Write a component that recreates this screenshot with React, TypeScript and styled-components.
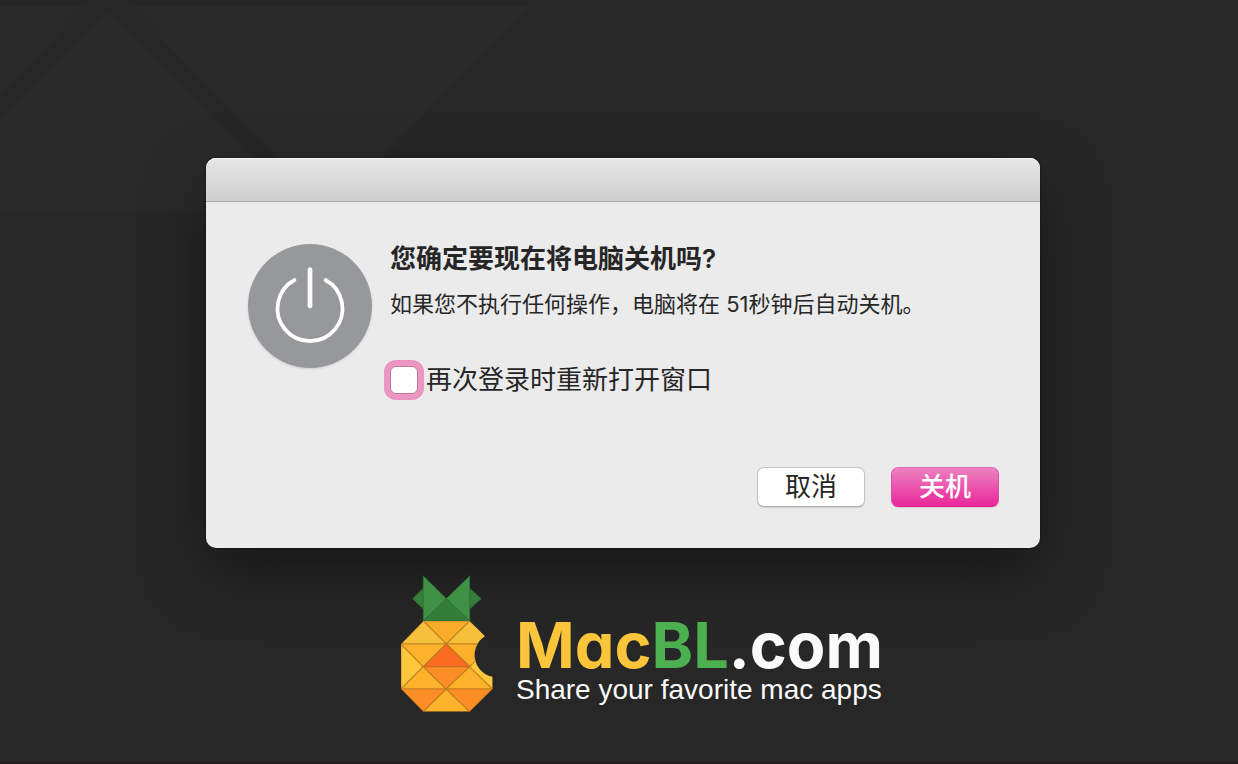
import React from "react";
import styled, { createGlobalStyle } from "styled-components";

const GlobalStyle = createGlobalStyle`
  *, *::before, *::after { box-sizing: border-box; }
  body {
    margin: 0;
    background: #272727;
    color: #262626;
    font-family: Inter, "Noto Sans CJK SC", sans-serif;
  }
`;

const Desktop = styled.main`
  position: relative;
  display: flex;
  flex-direction: column;
  align-items: center;
  gap: 28px;
  min-height: 100vh;
  padding: 158px 16px 48px 24px;
  overflow: hidden;
  border-bottom: 2px solid #221e20;
`;

const Wallpaper = styled.svg`
  position: absolute;
  top: 0;
  left: 0;
  fill: #2a2a2a;
`;

const Dialog = styled.section`
  position: relative;
  width: 100%;
  max-width: 834px;
  border-radius: 10px;
  background: #ebebeb;
  box-shadow: 0 0 2px rgba(0, 0, 0, 0.6), 0 24px 64px rgba(0, 0, 0, 0.42);
`;

const TitleBar = styled.header`
  height: 44px;
  border-bottom: 1px solid #aaa8aa;
  border-radius: 10px 10px 0 0;
  background: linear-gradient(#e6e6e6, #cfcfcf);
  box-shadow: inset 0 1px 0 #f6f6f6;
`;

const DialogBody = styled.form`
  display: flex;
  flex-direction: column;
  gap: 72px;
  padding: 42px 41px 41px 42px;
`;

const Message = styled.div`
  display: flex;
  align-items: flex-start;
  gap: 18px;
`;

const PowerIcon = styled.svg`
  flex: none;
  width: 124px;
  height: 124px;
  overflow: visible;
  filter: drop-shadow(0 1px 1px rgba(0, 0, 0, 0.12));
`;

const MessageText = styled.div`
  display: flex;
  flex-direction: column;
`;

const Title = styled.h1`
  margin: 0;
  font-size: 26px;
  font-weight: 600;
  line-height: 30px;
`;

const Detail = styled.p`
  margin: 15px 0 0;
  font-size: 22px;
  line-height: 30px;
`;

const CheckRow = styled.label`
  display: flex;
  align-items: center;
  gap: 8px;
  margin-top: 46px;
  font-size: 26px;
  line-height: 30px;
`;

const Checkbox = styled.input`
  flex: none;
  appearance: none;
  width: 28px;
  height: 28px;
  margin: 0;
  border: 1px solid #c7799f;
  border-radius: 6px;
  background: #fff;
  box-shadow: 0 0 0 6px #eb96c0;
  outline: none;

  &:checked {
    background: #e82f9a;
  }
`;

const Actions = styled.div`
  display: flex;
  justify-content: flex-end;
  gap: 26px;
`;

const Button = styled.button`
  width: 108px;
  height: 40px;
  padding: 0;
  border: 1px solid #c4c4c4;
  border-bottom-color: #adadad;
  border-radius: 7px;
  background: #fff;
  box-shadow: 0 1px 1px rgba(0, 0, 0, 0.12);
  color: #262626;
  font: inherit;
  font-size: 26px;
  line-height: 36px;
`;

const PrimaryButton = styled(Button)`
  border-color: #e070b4 #e250a8 #dd2391;
  background: linear-gradient(#ec82c0, #ea2799);
  color: #fff;
  font-weight: 500;
`;

const Brand = styled.footer`
  position: relative;
  display: flex;
  gap: 23px;
  margin-left: 38px;
`;

const Pineapple = styled.svg`
  flex: none;
  width: 92px;
  height: 136px;
`;

const BrandText = styled.div`
  display: flex;
  flex-direction: column;
  padding-top: 38px;
  color: #fafafa;
`;

const Wordmark = styled.div`
  font-size: 63px;
  font-weight: 700;
  line-height: 62px;
  font-feature-settings: "cv11";
  white-space: nowrap;
`;

const Tint = styled.span<{ $color: string }>`
  color: ${({ $color }) => $color};
`;

const Tagline = styled.div`
  font-family: "Liberation Sans", Arial, sans-serif;
  font-size: 28px;
  line-height: 28px;
  white-space: nowrap;
`;

const facets: [string, string][] = [
  ["103,168 242,168 172,237", "#faac2b"],
  ["103,168 172,237 36,237", "#f7c03c"],
  ["242,168 320,237 172,237", "#f7c03c"],
  ["36,237 103,305 36,372", "#fec73b"],
  ["36,237 172,237 103,305", "#fdb22b"],
  ["172,237 320,237 242,305", "#fdb02b"],
  ["103,305 172,372 36,372", "#fdb22b"],
  ["103,305 242,305 172,372", "#fd8d25"],
  ["242,305 311,372 172,372", "#fdb22b"],
  ["242,305 262,285 320,300 311,372", "#fec73b"],
  ["172,237 242,305 103,305", "#fa6c20"],
  ["36,372 172,372 103,440", "#fd8d25"],
  ["172,372 242,440 103,440", "#fdb22b"],
  ["172,372 311,372 242,440", "#fd8d25"],
];

const leaves: [string, string][] = [
  ["71,101 103,70 103,132", "#357e39"],
  ["276,101 242,70 242,132", "#357e39"],
  ["103,33 172,101 103,168", "#3e9145"],
  ["242,33 242,168 172,101", "#3e9145"],
  ["103,168 172,101 242,168", "#347d38"],
];

export default function App() {
  return (
    <>
      <GlobalStyle />
      <Desktop>
        <Wallpaper width="540" height="212" viewBox="0 0 540 212" aria-hidden="true">
          <path d="M0 6H86L0 95Z" />
          <path d="M108 12L309 212H0V118Z" />
          <path d="M130 6H530L330 212Z" />
        </Wallpaper>

        <Dialog role="dialog" aria-labelledby="dialog-title" aria-describedby="dialog-detail">
          <TitleBar />
          <DialogBody onSubmit={(event) => event.preventDefault()}>
            <Message>
              <PowerIcon viewBox="0 0 124 124" aria-hidden="true">
                <circle cx="62" cy="62" r="62" fill="#969899" />
                <g fill="none" stroke="#fff" strokeLinecap="round">
                  <path d="M46.5 36A32.5 32.5 0 1 0 77.5 36" strokeWidth="3.7" />
                  <path d="M62 25.5V62" strokeWidth="4.7" />
                </g>
              </PowerIcon>
              <MessageText>
                <Title id="dialog-title">您确定要现在将电脑关机吗?</Title>
                <Detail id="dialog-detail">如果您不执行任何操作，电脑将在 51秒钟后自动关机。</Detail>
                <CheckRow>
                  <Checkbox type="checkbox" />
                  再次登录时重新打开窗口
                </CheckRow>
              </MessageText>
            </Message>
            <Actions>
              <Button type="button">取消</Button>
              <PrimaryButton type="submit">关机</PrimaryButton>
            </Actions>
          </DialogBody>
        </Dialog>

        <Brand>
          <Pineapple viewBox="36 33 276 408" overflow="visible" aria-hidden="true">
            <defs>
              <clipPath id="bitten">
                <path d="M103 168H242L288 214A66 66 0 0 0 311 335V372L242 440H103L36 372V237Z" />
              </clipPath>
            </defs>
            {leaves.map(([points, fill]) => (
              <polygon key={points} points={points} fill={fill} stroke="#2f7434" strokeWidth="2" />
            ))}
            <g clipPath="url(#bitten)" stroke="#b5761c" strokeOpacity="0.5" strokeWidth="4">
              {facets.map(([points, fill]) => (
                <polygon key={points} points={points} fill={fill} />
              ))}
            </g>
          </Pineapple>
          <BrandText>
            <Wordmark>
              <Tint $color="#fac53b">Mac</Tint>
              <Tint $color="#4caf50">BL</Tint>.com
            </Wordmark>
            <Tagline>Share your favorite mac apps</Tagline>
          </BrandText>
        </Brand>
      </Desktop>
    </>
  );
}
